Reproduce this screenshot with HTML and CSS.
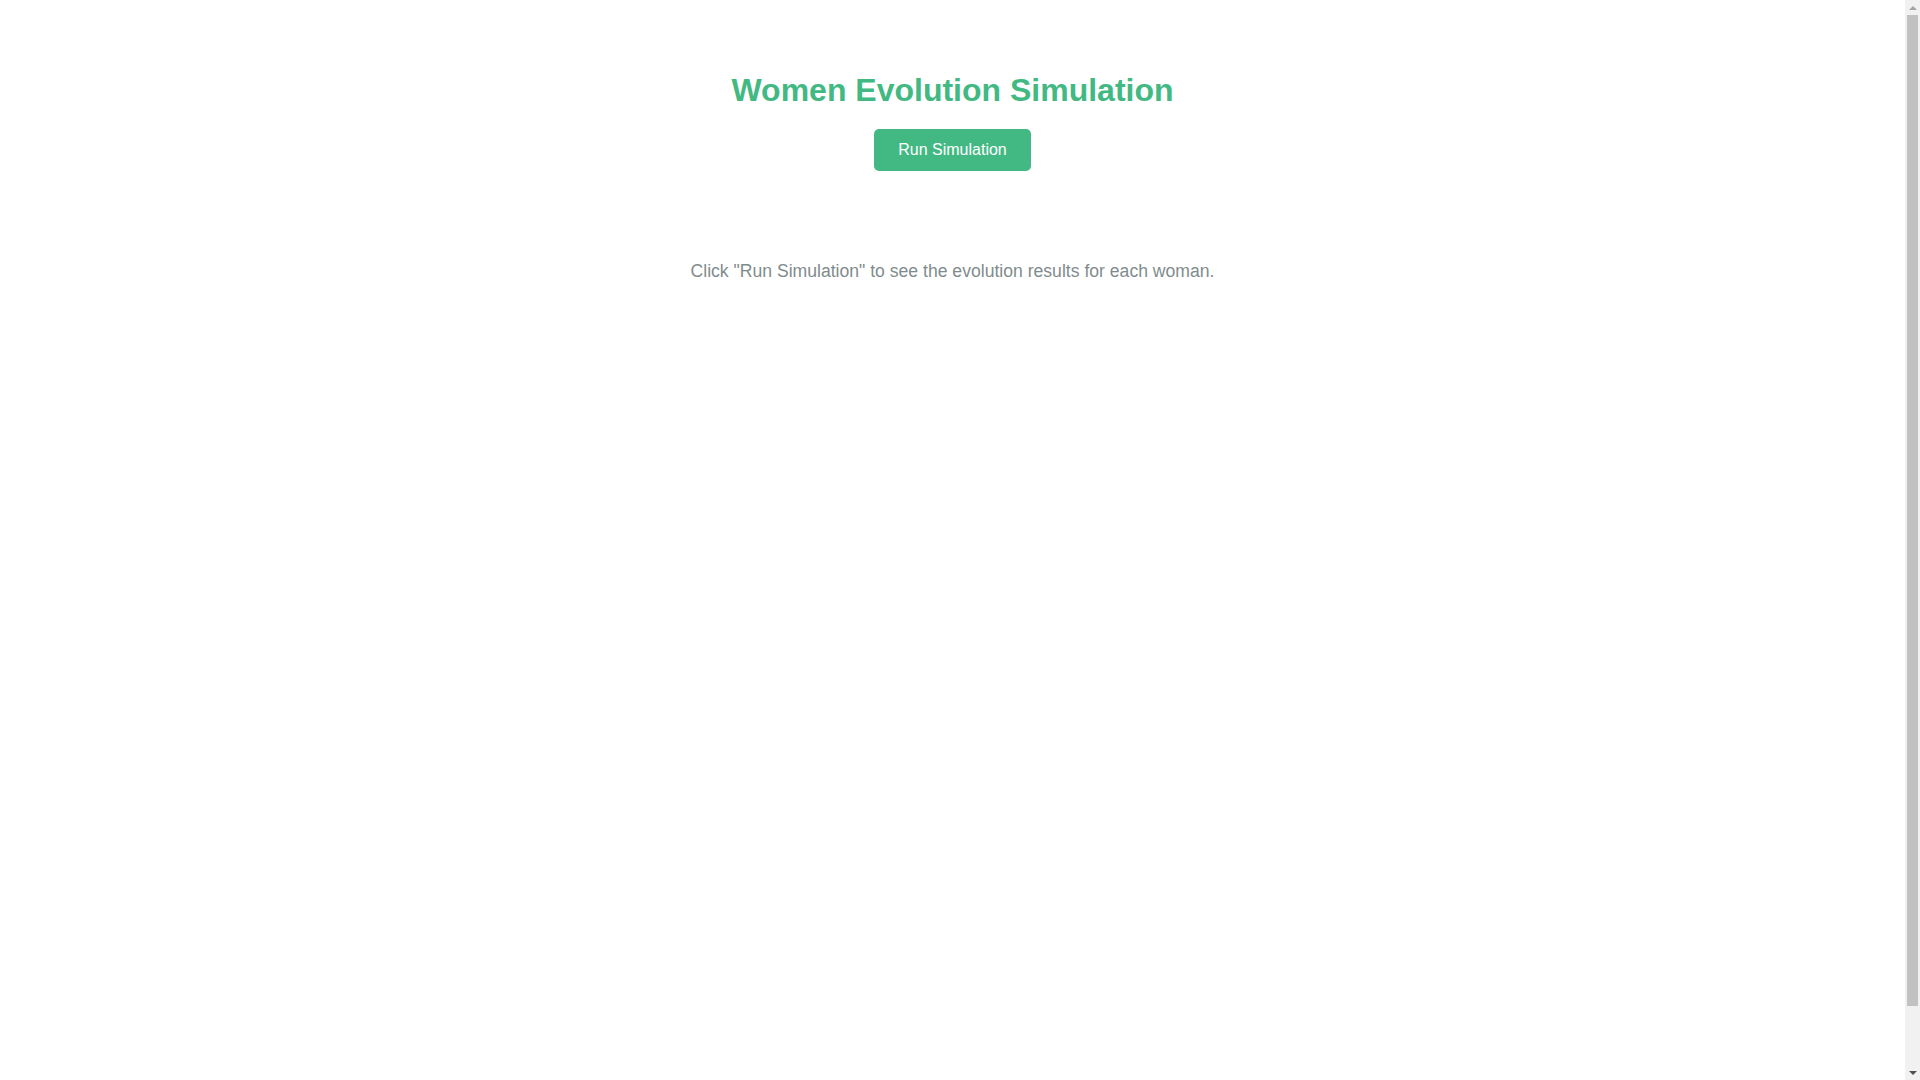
FILE: index.html
```html
<!DOCTYPE html>
<html lang="en">
<head>
<meta charset="utf-8">
<title>Women Evolution Simulation</title>
<link rel="stylesheet" href="styles.css">
</head>
<body>
<div class="app">
  <h1 class="title">Women Evolution Simulation</h1>
  <button class="run-btn" type="button">Run Simulation</button>
  <div class="results">
    <p class="empty">Click "Run Simulation" to see the evolution results for each woman.</p>
  </div>
</div>
<div class="scrollbar" aria-hidden="true">
  <span class="sb-arrow sb-up"></span>
  <span class="sb-thumb"></span>
  <span class="sb-arrow sb-down"></span>
</div>
</body>
</html>
```

FILE: styles.css
```css
html, body {
  margin: 0;
}
html {
  overflow: hidden;
}
body {
  box-sizing: border-box;
  padding: 32px 47px 32px 32px;
  min-height: 100vh;
  font-family: "Liberation Sans", Arial, sans-serif;
  background: #ffffff;
  color: #2c3e50;
}
.app {
  padding-top: 19px;
  text-align: center;
}
.title {
  font-size: 32px;
  font-weight: bold;
  color: #42b983;
  margin: 21.44px 0 19.6px;
  line-height: normal;
}
.run-btn {
  font-family: "Liberation Sans", Arial, sans-serif;
  font-size: 16px;
  line-height: normal;
  color: #ffffff;
  background: #42b983;
  border: none;
  border-radius: 5px;
  padding: 12px 24px;
  margin: 0;
  cursor: pointer;
}
.results {
  margin-top: 40px;
}
.empty {
  margin: 0;
  padding-top: 49.9px;
  font-size: 17.6px;
  color: #7f8c8d;
}

/* decorative browser scrollbar, overlaid on the right edge */
.scrollbar {
  position: fixed;
  top: 0;
  right: 0;
  width: 15px;
  height: 100vh;
  background: #f1f1f1;
  display: flex;
  flex-direction: column;
  align-items: center;
}
.sb-arrow {
  flex: 0 0 15px;
  width: 15px;
  display: flex;
  align-items: center;
  justify-content: center;
}
.sb-arrow::before {
  content: "";
  width: 0;
  height: 0;
  border-left: 4px solid transparent;
  border-right: 4px solid transparent;
}
.sb-up::before {
  border-bottom: 4px solid #a3a3a3;
}
.sb-down::before {
  border-top: 4px solid #505050;
}
.sb-thumb {
  width: 11px;
  height: 991px;
  background: #c1c1c1;
  flex: 0 0 auto;
}
.sb-down {
  margin-top: auto;
}
```
